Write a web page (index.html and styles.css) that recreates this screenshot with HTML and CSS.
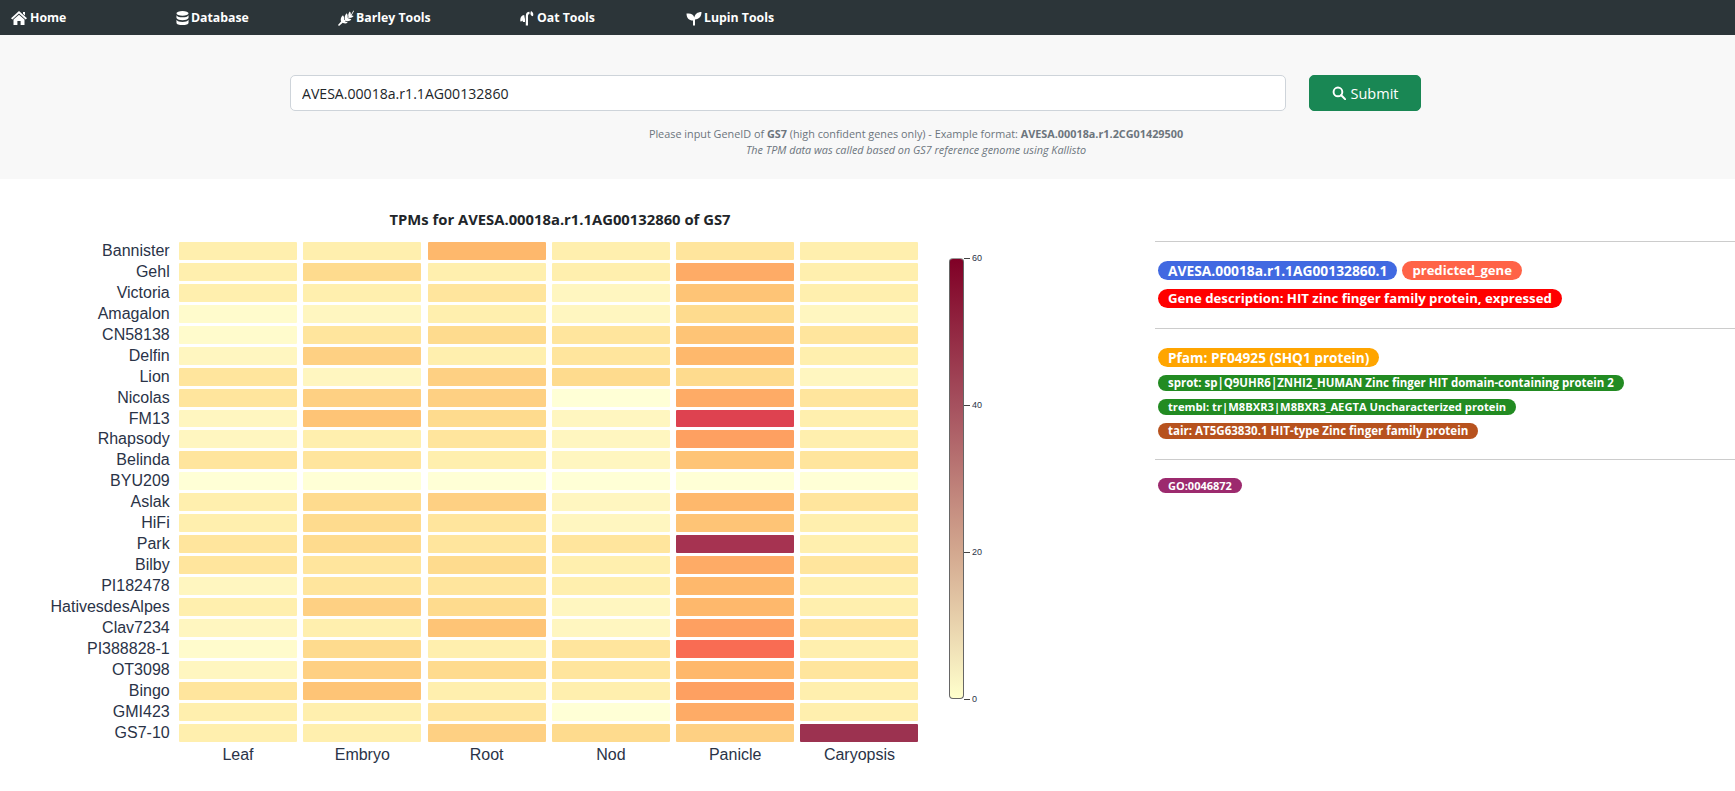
FILE: index.html
```html
<!DOCTYPE html>
<html lang="en">
<head>
    <meta charset="UTF-8" />
    <title>Gene Expression</title>
    <link rel="stylesheet" href="styles.css">
</head>
<body>
    <nav class="navbar">
        <a class="nav-link nav-home" href="#">
            <svg class="nav-icon" viewBox="0 0 16 16"><path d="M8 1 L16 8.3 L14.6 9.4 L8 3.6 L1.4 9.4 L0 8.3 Z M12 2 H14 V5.5 L12 3.8 Z M8 4.8 L13.5 9.6 V15 H9.6 V11 H6.4 V15 H2.5 V9.6 Z"/></svg>
            Home
        </a>
        <a class="nav-link nav-database" href="#">
            <svg class="nav-icon nav-icon-db" viewBox="0 0 14 16"><ellipse cx="7" cy="3" rx="6.5" ry="2.6"/><path d="M.5 5c1 1.700 3.500 2.300 6.500 2.300S12.500 6.700 13.500 5v3c-1 1.700-3.500 2.300-6.500 2.300S1.500 9.700.5 8z"/><path d="M.5 10c1 1.700 3.500 2.300 6.500 2.300s5.500-.6 6.500-2.300v3c0 1.500-2.900 2.600-6.500 2.600S.5 14.500.5 13z"/></svg>
            Database
        </a>
        <a class="nav-link nav-barley" href="#">
            <svg class="nav-icon" viewBox="0 0 16 16"><path d="M0 15 L3.500 11 L5 12.500 L1 16 Z"/><path d="M3 11.500 C2.300 8.800 3 6.800 5 5.300 C6.200 6.900 6.500 8.500 6 10 L7 9.600 C6.300 7.300 6.800 5 8.600 3.200 C9.700 4.600 10 6.200 9.500 7.700 L10.500 7.200 C9.900 5.200 10.300 3.200 11.800 1.600 C12.700 2.700 13 3.800 12.800 5 L15.500 .5 L16 1 L13.500 5.500 C14.300 5.400 15 5.600 15.700 6 C14.400 7.700 12.500 8.200 10.600 7.800 L10.200 8.600 C11.400 8.500 12.500 8.800 13.400 9.500 C11.700 11.300 9.500 11.500 7.300 10.700 L6.800 11.500 C7.900 11.500 8.800 11.800 9.700 12.600 C7.800 14 5.300 13.800 3 11.500 Z"/></svg>
            Barley Tools
        </a>
        <a class="nav-link nav-oat" href="#">
            <svg class="nav-icon" viewBox="0 0 16 16"><path d="M6.800 15.500 V6 C6.800 3.200 8.200 1.800 10.500 1.800 V4 C9.500 4 9 4.700 9 6 V15.500 Z"/><path d="M12 1 C14 2 14.800 3.700 14 6.300 C11.800 6 10.700 4.200 12 1 Z"/><path d="M5.200 5 C2.500 5.500 1 7.200 1.400 11.500 C2.500 11.300 3.200 11 3.800 10.400 V12 H6 V9 C5.700 8 5.400 6.500 5.200 5 Z"/></svg>
            Oat Tools
        </a>
        <a class="nav-link nav-lupin" href="#">
            <svg class="nav-icon" viewBox="0 0 16 16"><path d="M7 15.500 V10.500 C3 10.500 .5 8 .5 3.500 H2.500 C5.500 3.500 7.600 5 8.300 7.400 C9 4.200 11.300 2 15.500 2 C15.500 6.500 13.300 9 9 9.500 V15.500 Z"/></svg>
            Lupin Tools
        </a>
    </nav>

    <section class="search">
        <form class="search-row">
            <input class="search-input" type="text" value="AVESA.00018a.r1.1AG00132860" />
            <button class="search-btn" type="button">
                <svg class="btn-icon" viewBox="0 0 16 16"><circle cx="6.800" cy="6.800" r="5" fill="none" stroke="#fff" stroke-width="2.200"/><path d="M10.500 10.500 L15 15" stroke="#fff" stroke-width="2.400" stroke-linecap="round"/></svg>
                Submit
            </button>
        </form>
        <p class="hint">Please input GeneID of <b>GS7</b> (high confident genes only) - Example format: <b>AVESA.00018a.r1.2CG01429500</b></p>
        <p class="hint hint-note">The TPM data was called based on GS7 reference genome using Kallisto</p>
    </section>

    <main class="content">
        <div class="chart">
            <h2 class="chart-title">TPMs for AVESA.00018a.r1.1AG00132860 of GS7</h2>
            <div class="chart-body">
                <div class="heatmap">
                    <div class="row-label">Bannister</div><div class="cell l4"></div><div class="cell l4"></div><div class="cell l9"></div><div class="cell l4"></div><div class="cell l5"></div><div class="cell l4"></div>
                    <div class="row-label">Gehl</div><div class="cell l4"></div><div class="cell l6"></div><div class="cell l4"></div><div class="cell l4"></div><div class="cell l10"></div><div class="cell l4"></div>
                    <div class="row-label">Victoria</div><div class="cell l4"></div><div class="cell l4"></div><div class="cell l5"></div><div class="cell l3"></div><div class="cell l8"></div><div class="cell l4"></div>
                    <div class="row-label">Amagalon</div><div class="cell l2"></div><div class="cell l3"></div><div class="cell l4"></div><div class="cell l3"></div><div class="cell l6"></div><div class="cell l3"></div>
                    <div class="row-label">CN58138</div><div class="cell l2"></div><div class="cell l5"></div><div class="cell l6"></div><div class="cell l5"></div><div class="cell l8"></div><div class="cell l5"></div>
                    <div class="row-label">Delfin</div><div class="cell l3"></div><div class="cell l7"></div><div class="cell l4"></div><div class="cell l5"></div><div class="cell l9"></div><div class="cell l4"></div>
                    <div class="row-label">Lion</div><div class="cell l5"></div><div class="cell l3"></div><div class="cell l7"></div><div class="cell l6"></div><div class="cell l6"></div><div class="cell l3"></div>
                    <div class="row-label">Nicolas</div><div class="cell l5"></div><div class="cell l7"></div><div class="cell l7"></div><div class="cell l1"></div><div class="cell l10"></div><div class="cell l5"></div>
                    <div class="row-label">FM13</div><div class="cell l3"></div><div class="cell l8"></div><div class="cell l6"></div><div class="cell l3"></div><div class="cell l13"></div><div class="cell l4"></div>
                    <div class="row-label">Rhapsody</div><div class="cell l3"></div><div class="cell l4"></div><div class="cell l5"></div><div class="cell l3"></div><div class="cell l11"></div><div class="cell l4"></div>
                    <div class="row-label">Belinda</div><div class="cell l5"></div><div class="cell l5"></div><div class="cell l4"></div><div class="cell l3"></div><div class="cell l8"></div><div class="cell l5"></div>
                    <div class="row-label">BYU209</div><div class="cell l1"></div><div class="cell l1"></div><div class="cell l1"></div><div class="cell l1"></div><div class="cell l1"></div><div class="cell l1"></div>
                    <div class="row-label">Aslak</div><div class="cell l4"></div><div class="cell l6"></div><div class="cell l7"></div><div class="cell l3"></div><div class="cell l9"></div><div class="cell l5"></div>
                    <div class="row-label">HiFi</div><div class="cell l4"></div><div class="cell l6"></div><div class="cell l5"></div><div class="cell l3"></div><div class="cell l8"></div><div class="cell l4"></div>
                    <div class="row-label">Park</div><div class="cell l5"></div><div class="cell l6"></div><div class="cell l5"></div><div class="cell l5"></div><div class="cell l14"></div><div class="cell l4"></div>
                    <div class="row-label">Bilby</div><div class="cell l5"></div><div class="cell l5"></div><div class="cell l6"></div><div class="cell l4"></div><div class="cell l10"></div><div class="cell l5"></div>
                    <div class="row-label">PI182478</div><div class="cell l3"></div><div class="cell l5"></div><div class="cell l5"></div><div class="cell l4"></div><div class="cell l9"></div><div class="cell l4"></div>
                    <div class="row-label">HativesdesAlpes</div><div class="cell l4"></div><div class="cell l7"></div><div class="cell l6"></div><div class="cell l3"></div><div class="cell l9"></div><div class="cell l4"></div>
                    <div class="row-label">Clav7234</div><div class="cell l3"></div><div class="cell l4"></div><div class="cell l8"></div><div class="cell l3"></div><div class="cell l11"></div><div class="cell l5"></div>
                    <div class="row-label">PI388828-1</div><div class="cell l2"></div><div class="cell l6"></div><div class="cell l4"></div><div class="cell l5"></div><div class="cell l12"></div><div class="cell l4"></div>
                    <div class="row-label">OT3098</div><div class="cell l3"></div><div class="cell l7"></div><div class="cell l6"></div><div class="cell l5"></div><div class="cell l9"></div><div class="cell l5"></div>
                    <div class="row-label">Bingo</div><div class="cell l5"></div><div class="cell l8"></div><div class="cell l4"></div><div class="cell l4"></div><div class="cell l11"></div><div class="cell l4"></div>
                    <div class="row-label">GMI423</div><div class="cell l4"></div><div class="cell l4"></div><div class="cell l5"></div><div class="cell l1"></div><div class="cell l10"></div><div class="cell l4"></div>
                    <div class="row-label">GS7-10</div><div class="cell l4"></div><div class="cell l4"></div><div class="cell l7"></div><div class="cell l6"></div><div class="cell l7"></div><div class="cell l15"></div>
                    <div></div><div class="col-label">Leaf</div><div class="col-label">Embryo</div><div class="col-label">Root</div><div class="col-label">Nod</div><div class="col-label">Panicle</div><div class="col-label">Caryopsis</div>
                </div>
                <div class="colorbar">
                    <div class="colorbar-track"></div>
                    <div class="colorbar-ticks">
                        <div class="tick">60</div>
                        <div class="tick">40</div>
                        <div class="tick">20</div>
                        <div class="tick">0</div>
                    </div>
                </div>
            </div>
        </div>

        <aside class="info">
            <hr />
            <div class="pills pills-first">
                <div class="pill-line">
                    <span class="pill pill-lg pill-blue">AVESA.00018a.r1.1AG00132860.1</span>
                    <span class="pill pill-lg pill-tomato">predicted_gene</span>
                </div>
                <div class="pill-line">
                    <span class="pill pill-lg pill-red">Gene description: HIT zinc finger family protein, expressed</span>
                </div>
            </div>
            <hr />
            <div class="pills pills-second">
                <div class="pill-line">
                    <span class="pill pill-lg pill-orange">Pfam: PF04925 (SHQ1 protein)</span>
                </div>
                <div class="pill-line">
                    <span class="pill pill-sm pill-sprot">sprot: sp|Q9UHR6|ZNHI2_HUMAN Zinc finger HIT domain-containing protein 2</span>
                </div>
                <div class="pill-line">
                    <span class="pill pill-sm pill-trembl">trembl: tr|M8BXR3|M8BXR3_AEGTA Uncharacterized protein</span>
                </div>
                <div class="pill-line">
                    <span class="pill pill-sm pill-tair">tair: AT5G63830.1 HIT-type Zinc finger family protein</span>
                </div>
            </div>
            <hr />
            <div class="pills pills-third pill-line">
                <span class="pill pill-xs pill-purple">GO:0046872</span>
            </div>
        </aside>
    </main>
</body>
</html>
```

FILE: styles.css
```css
* {
    margin: 0;
    padding: 0;
    box-sizing: border-box;
}

body {
    background-color: white;
    font-family: 'Open Sans', 'Noto Sans', sans-serif;
    color: #212529;
}

/* top bar */
.navbar {
    display: flex;
    align-items: center;
    height: 35px;
    background-color: #2c3539;
}

.nav-link {
    display: flex;
    align-items: center;
    gap: 2px;
    color: white;
    font-size: 12.300px;
    font-weight: 700;
    text-decoration: none;
    white-space: nowrap;
}

.nav-icon {
    width: 16px;
    height: 16px;
    fill: white;
}

.nav-icon-db {
    width: 13px;
}

.nav-home { margin-left: 11px; width: 165px; gap: 3px; }
.nav-database { width: 162px; }
.nav-barley { width: 181px; }
.nav-oat { width: 167px; }

/* search form */
.search {
    height: 144px;
    padding-top: 40px;
    background-color: #f8f8f8;
}

.search-row {
    display: flex;
    gap: 23px;
    margin-left: 290px;
    margin-bottom: 15px;
}

.search-input {
    width: 996px;
    height: 36px;
    padding: 0 11px;
    border: 1px solid #ced4da;
    border-radius: 5px;
    font-family: 'Open Sans', sans-serif;
    font-size: 14.100px;
    color: #212529;
    outline: none;
}

.search-btn {
    display: flex;
    align-items: center;
    justify-content: center;
    gap: 5px;
    width: 112px;
    height: 36px;
    border: 1px solid #198754;
    border-radius: 5px;
    background-color: #198754;
    color: white;
    font-family: 'Open Sans', sans-serif;
    font-size: 14.500px;
}

.btn-icon {
    width: 14px;
    height: 14px;
}

.hint {
    margin-left: 97px;
    text-align: center;
    font-size: 10.840px;
    line-height: 16px;
    color: #6c757d;
}

.hint-note {
    font-style: italic;
}

/* chart and gene info */
.content {
    display: flex;
}

.chart {
    width: 1155px;
    padding-top: 31px;
}

.chart-title {
    width: 1120px;
    height: 32px;
    text-align: center;
    font-size: 14.800px;
    line-height: 19px;
    font-weight: 700;
}

.chart-body {
    display: flex;
}

.heatmap {
    display: grid;
    grid-template-columns: 172.700px repeat(6, 118px);
    grid-template-rows: repeat(24, 17.940px) 24px;
    column-gap: 6.300px;
    row-gap: 3px;
    font-family: 'Liberation Sans', Arial, sans-serif;
    font-size: 16px;
    color: #2a3347;
}

.row-label {
    margin-right: 3px;
    text-align: right;
    line-height: 18px;
    white-space: nowrap;
}

.col-label {
    text-align: center;
    line-height: 20px;
}

.cell { border-radius: 1px; }
.l1 { background-color: #ffffd6; }
.l2 { background-color: #fffbcc; }
.l3 { background-color: #fff6c0; }
.l4 { background-color: #ffefae; }
.l5 { background-color: #ffe59d; }
.l6 { background-color: #fedb8e; }
.l7 { background-color: #fed083; }
.l8 { background-color: #fec476; }
.l9 { background-color: #feb86c; }
.l10 { background-color: #feab66; }
.l11 { background-color: #fea061; }
.l12 { background-color: #f96c53; }
.l13 { background-color: #de4250; }
.l14 { background-color: #a63351; }
.l15 { background-color: #9c3250; }

.colorbar {
    display: flex;
    height: 441px;
    margin-left: 30.500px;
    margin-top: 16px;
}

.colorbar-track {
    width: 15px;
    border: 1px solid #666;
    border-top-color: #999;
    border-radius: 4px;
    background: linear-gradient(to bottom, #800026, #a5505e 33%, #d2a68e 66%, #ffffcc);
}

.colorbar-ticks {
    display: flex;
    flex-direction: column;
    justify-content: space-between;
    font-family: 'Liberation Sans', Arial, sans-serif;
    font-size: 9px;
    color: #2a3347;
}

.tick {
    display: flex;
    align-items: center;
    gap: 2px;
    height: 0;
}

.tick::before {
    content: "";
    width: 6px;
    height: 1px;
    background-color: #444;
}

/* right panel */
.info {
    flex: 1;
    padding-top: 62px;
}

.info hr {
    border: none;
    border-top: 1px solid #ccc;
}

.pills {
    padding-left: 3px;
}

.pills-first { padding-top: 19px; height: 86px; }
.pills-second { padding-top: 19px; height: 130px; }
.pills-third { padding-top: 18px; }

.pill-line {
    display: flex;
    gap: 5px;
}

.pill {
    display: inline-block;
    padding: 0 10px;
    border-radius: 10px;
    color: white;
    font-weight: 700;
    white-space: nowrap;
}

.pill-lg {
    height: 19px;
    margin-bottom: 9px;
    line-height: 19px;
}

.pill-sm {
    height: 16px;
    margin-bottom: 8px;
    line-height: 16px;
}

.pills-second .pill-lg { margin-bottom: 8px; }

.pill-xs {
    height: 15px;
    font-size: 11px;
    line-height: 15px;
}

.pill-blue { background-color: #4169e1; font-size: 13.800px; }
.pill-tomato { background-color: #ff6347; font-size: 13.100px; }
.pill-red { background-color: #ff0000; font-size: 13.200px; }
.pill-orange { background-color: #ffa500; font-size: 13.650px; }
.pill-sprot { background-color: #228b22; font-size: 11.460px; }
.pill-trembl { background-color: #228b22; font-size: 11.200px; }
.pill-tair { background-color: #b7521e; font-size: 11.550px; }
.pill-purple { background-color: #9c2a6e; }
```
